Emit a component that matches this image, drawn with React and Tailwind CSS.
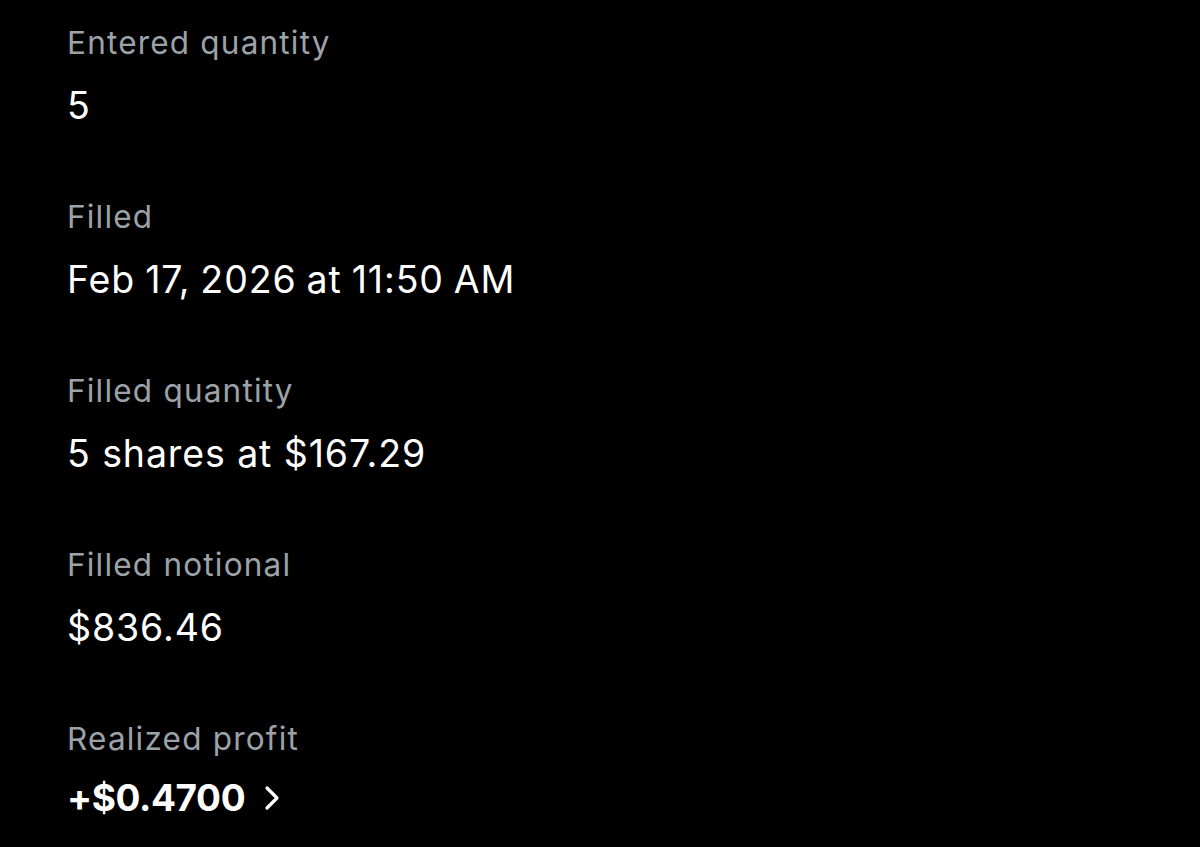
import React from "react";

const rows = [
  { label: "Entered quantity", value: "5" },
  { label: "Filled", value: "Feb 17, 2026 at 11:50 AM", tight: true },
  { label: "Filled quantity", value: "5 shares at $167.29" },
  { label: "Filled notional", value: "$836.46" },
];

export default function App() {
  return (
    <div
      className="w-[1200px] h-[847px] bg-black overflow-hidden pl-[67px] pt-[23px] flex flex-col gap-[68px]"
      style={{ fontFamily: "Inter, 'Liberation Sans', sans-serif" }}
    >
      {rows.map((r) => (
        <div key={r.label} className="flex flex-col gap-[20px]">
          <div className="text-[31.5px] leading-[40px] text-[#9ca3a8] tracking-[1.2px]">{r.label}</div>
          <div
            className={
              r.tight
                ? "text-[37.5px] leading-[46px] text-white tracking-[0.9px] [word-spacing:-1.5px]"
                : "text-[37.5px] leading-[46px] text-white tracking-[0.9px]"
            }
          >
            {r.value}
          </div>
        </div>
      ))}
      <div className="flex flex-col gap-[16px]">
        <div className="text-[31.5px] leading-[40px] text-[#9ca3a8] tracking-[1.2px]">Realized profit</div>
        <div className="flex items-center gap-[18px] text-[37px] leading-[46px] text-white font-bold tracking-[-0.4px]">
          <span>+$0.4700</span>
          <svg width="18" height="26" viewBox="0 0 18 26" fill="none">
            <path d="M4 3 L14 13 L4 23" stroke="white" strokeWidth="3.2" strokeLinecap="round" strokeLinejoin="round" />
          </svg>
        </div>
      </div>
    </div>
  );
}
